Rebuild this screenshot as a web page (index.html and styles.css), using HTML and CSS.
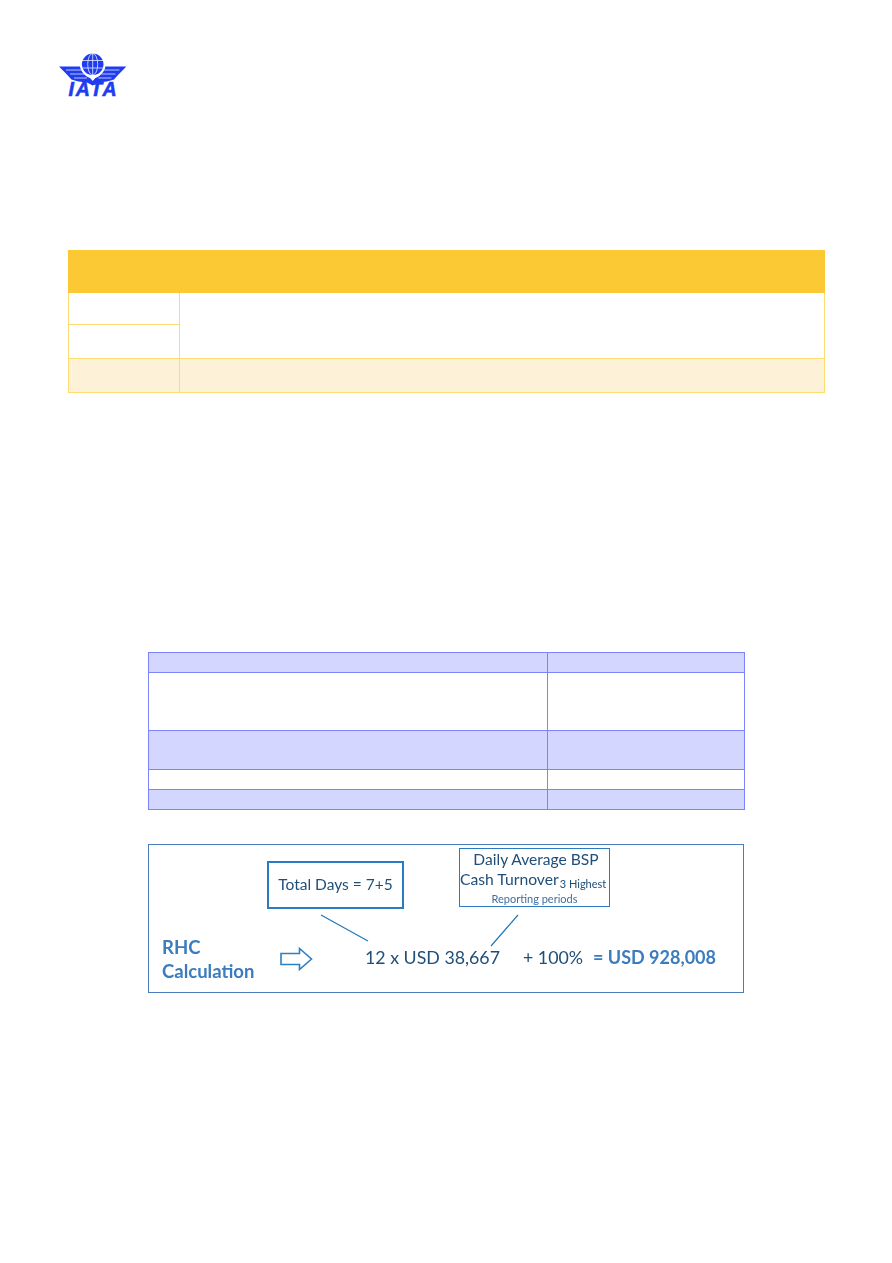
FILE: index.html
```html
<!DOCTYPE html>
<html lang="en">
<head>
<meta charset="utf-8">
<title>IATA RHC Calculation</title>
<link rel="stylesheet" href="styles.css">
</head>
<body>
<main class="page">
  <svg class="logo" width="70" height="50" viewBox="0 0 70 50" aria-label="IATA logo">
    <g fill="#1f3cf0">
      <circle cx="34.7" cy="12.3" r="10.8"/>
      <path d="M1 14.500H22C23 20 27 24 32 26L34.7 29L37.400 26C42.400 24 46.400 20 47.400 14.500H68.400L60 23L56 27.500C52 29 46 30 40.400 30.500L34.7 33.500L29 30.500C23.400 30 17.400 29 13.400 27.500L9.400 23Z"/>
    </g>
    <g fill="none" stroke="#ffffff" stroke-width="0.7">
      <ellipse cx="34.7" cy="12.3" rx="5" ry="10.800"/>
      <path d="M34.7 1.500V23M24 8.500H45.400M24 16H45.400"/>
      <path d="M8 18H23.500M12 22H26M16 26H29M61.400 18H45.900M57.400 22H43.400M53.400 26H40.400"/>
    </g>
    <text class="logo-text" x="35.500" y="44" text-anchor="middle">IATA</text>
  </svg>

  <table class="yellow-table">
    <colgroup><col class="yellow-first"><col></colgroup>
    <thead>
      <tr class="yellow-head"><th colspan="2"></th></tr>
    </thead>
    <tbody>
      <tr class="yellow-row-a"><td></td><td rowspan="2"></td></tr>
      <tr class="yellow-row-b"><td></td></tr>
      <tr class="yellow-row-b yellow-shaded"><td></td><td></td></tr>
    </tbody>
  </table>

  <table class="blue-table">
    <colgroup><col class="blue-first"><col></colgroup>
    <tbody>
      <tr class="blue-short blue-shaded"><td></td><td></td></tr>
      <tr class="blue-tall"><td></td><td></td></tr>
      <tr class="blue-mid blue-shaded"><td></td><td></td></tr>
      <tr class="blue-short"><td></td><td></td></tr>
      <tr class="blue-short blue-shaded"><td></td><td></td></tr>
    </tbody>
  </table>

  <section class="diagram">
    <div class="box box-days">Total Days = 7+5</div>
    <div class="box box-daily">
      <div class="daily-one">Daily Average BSP</div>
      <div class="daily-two">Cash Turnover<span class="daily-sub">3 Highest</span></div>
      <div class="daily-three">Reporting periods</div>
    </div>
    <svg class="connectors" width="596" height="148" viewBox="0 0 596 148" aria-hidden="true">
      <path d="M172 70L219 96M369 70L342 101" fill="none" stroke="#1f78b8" stroke-width="1.2"/>
      <path d="M132 108.500H150.500V103.500L162.500 114L150.500 124.500V119.500H132Z" fill="#ffffff" stroke="#2e80c4" stroke-width="1.6"/>
    </svg>
    <div class="rhc-label">RHC<br>Calculation</div>
    <div class="formula formula-main">12 x USD 38,667</div>
    <div class="formula formula-plus">+ 100%</div>
    <div class="formula formula-result">= USD 928,008</div>
  </section>
</main>
</body>
</html>
```

FILE: styles.css
```css
* { box-sizing: border-box; }

html, body { margin: 0; padding: 0; background: #ffffff; }

.page {
  width: 892px;
  height: 1263px;
  padding: 52px 67px 0 68px;
  overflow: hidden;
  font-family: Lato, "Open Sans", sans-serif;
}

.logo { display: block; margin: 0 0 0 -10px; }

.logo-text {
  font: italic 700 19.500px "Liberation Sans", Arial, sans-serif;
  letter-spacing: 1.800px;
  fill: #1f3cf0;
  stroke: #1f3cf0;
  stroke-width: 0.600px;
}

table { border-collapse: collapse; table-layout: fixed; }
td, th { padding: 0; }

.yellow-table {
  width: 757px;
  margin-top: 148px;
}
.yellow-first { width: 111px; }
.yellow-head { height: 42px; background: #fbc933; }
.yellow-head th { border: 1px solid #fbc933; }
.yellow-table td { border: 1px solid #fedb73; }
.yellow-row-a { height: 32px; }
.yellow-row-b { height: 34px; }
.yellow-shaded { background: #fdf2d8; }

.blue-table {
  width: 597px;
  margin: 259px 0 0 80px;
}
.blue-first { width: 399px; }
.blue-table td { border: 1px solid #7c83fb; }
.blue-shaded { background: #d3d6ff; }
.blue-short { height: 20px; }
.blue-tall { height: 58px; }
.blue-mid { height: 39px; }

.diagram {
  position: relative;
  width: 596px;
  height: 149px;
  margin: 34px 0 0 80px;
  border: 1px solid #4a7ebb;
  color: #1f4e79;
}

.box {
  position: absolute;
  background: #ffffff;
  border: 2px solid #2b7bc4;
  text-align: center;
  white-space: nowrap;
  filter: blur(0.350px);
}

.box-days {
  left: 118px;
  top: 16px;
  width: 137px;
  height: 48px;
  font-size: 15.500px;
  line-height: 42px;
}

.box-daily {
  left: 310px;
  top: 3px;
  width: 151px;
  height: 59px;
  border-width: 1.500px;
}

.daily-one { font-size: 15.600px; line-height: 20px; padding-left: 3px; }
.daily-two { font-size: 15.700px; line-height: 20px; text-align: left; }
.daily-sub { font-size: 11px; margin-left: 1px; position: relative; top: 3px; }
.daily-three { font-size: 11px; line-height: 13px; margin-top: 1px; color: #3f6f9f; }

.connectors { position: absolute; left: 0; top: 0; filter: blur(0.300px); }

.rhc-label {
  position: absolute;
  left: 13px;
  top: 90px;
  color: #3a7cbd;
  font-size: 18.500px;
  font-weight: 700;
  line-height: 24px;
  filter: blur(0.350px);
}

.formula {
  position: absolute;
  top: 101px;
  font-size: 17.800px;
  line-height: 22px;
  white-space: nowrap;
  filter: blur(0.350px);
}
.formula-main { left: 216px; }
.formula-plus { left: 374px; }
.formula-result { left: 444px; color: #3a7cbd; font-weight: 700; font-size: 18px; }
```
